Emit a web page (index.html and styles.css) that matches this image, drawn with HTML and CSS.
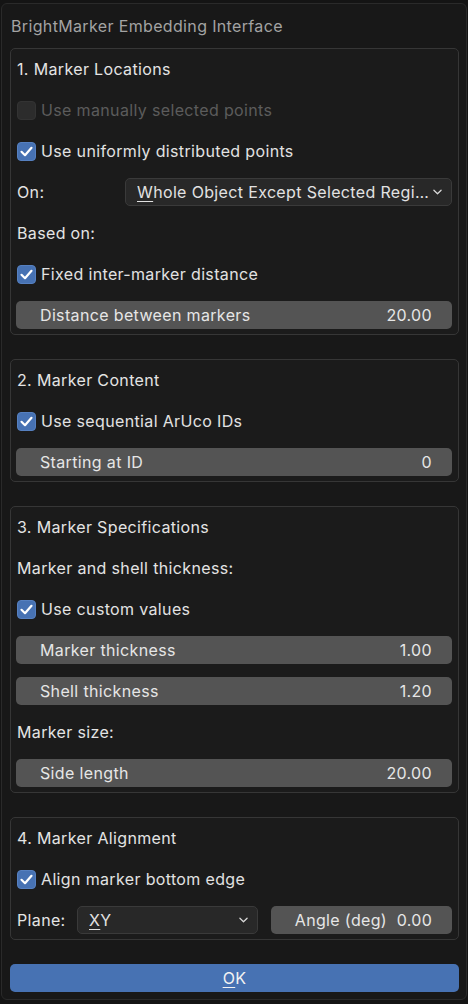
FILE: index.html
```html
<!DOCTYPE html>
<html>
<head>
<meta charset="utf-8">
<link rel="stylesheet" href="styles.css">
</head>
<body>
<div class="dialog">
  <div class="title">BrightMarker Embedding Interface</div>

  <section class="panel">
    <div class="row heading">1. Marker Locations</div>
    <div class="row check disabled"><span class="box"></span><span>Use manually selected points</span></div>
    <div class="row check"><span class="box on"><svg viewBox="0 0 19 19"><path d="M4.5 9.8 L8 13.2 L14.5 5.8"/></svg></span><span>Use uniformly distributed points</span></div>
    <div class="row split">
      <span class="label w-on">On:</span>
      <div class="dropdown grow"><span class="dd-text"><u>W</u>hole Object Except Selected Regi…</span><svg class="chev" viewBox="0 0 10 6"><path d="M1 1 L5 5 L9 1"/></svg></div>
    </div>
    <div class="row label">Based on:</div>
    <div class="row check"><span class="box on"><svg viewBox="0 0 19 19"><path d="M4.5 9.8 L8 13.2 L14.5 5.8"/></svg></span><span>Fixed inter-marker distance</span></div>
    <div class="row field"><span>Distance between markers</span><span>20.00</span></div>
  </section>

  <section class="panel">
    <div class="row heading">2. Marker Content</div>
    <div class="row check"><span class="box on"><svg viewBox="0 0 19 19"><path d="M4.5 9.8 L8 13.2 L14.5 5.8"/></svg></span><span>Use sequential ArUco IDs</span></div>
    <div class="row field"><span>Starting at ID</span><span>0</span></div>
  </section>

  <section class="panel">
    <div class="row heading">3. Marker Specifications</div>
    <div class="row label">Marker and shell thickness:</div>
    <div class="row check"><span class="box on"><svg viewBox="0 0 19 19"><path d="M4.5 9.8 L8 13.2 L14.5 5.8"/></svg></span><span>Use custom values</span></div>
    <div class="row field"><span>Marker thickness</span><span>1.00</span></div>
    <div class="row field"><span>Shell thickness</span><span>1.20</span></div>
    <div class="row label">Marker size:</div>
    <div class="row field"><span>Side length</span><span>20.00</span></div>
  </section>

  <section class="panel">
    <div class="row heading">4. Marker Alignment</div>
    <div class="row check"><span class="box on"><svg viewBox="0 0 19 19"><path d="M4.5 9.8 L8 13.2 L14.5 5.8"/></svg></span><span>Align marker bottom edge</span></div>
    <div class="row split">
      <span class="label w-plane">Plane:</span>
      <div class="dropdown plane"><span class="dd-text"><u>X</u>Y</span><svg class="chev" viewBox="0 0 10 6"><path d="M1 1 L5 5 L9 1"/></svg></div>
      <div class="field angle"><span>Angle (deg)&nbsp;&nbsp;0.00</span></div>
    </div>
  </section>

  <div class="ok"><span><u>O</u>K</span></div>
</div>
</body>
</html>
```

FILE: styles.css
```css
html, body {
  margin: 0;
  padding: 0;
}
body {
  background: #141414;
  width: 468px;
  height: 1004px;
  overflow: hidden;
  font-family: Inter, "DejaVu Sans", sans-serif;
  font-size: 16px;
  letter-spacing: 0.35px;
  color: #e2e2e2;
}
.dialog {
  box-sizing: border-box;
  margin: 3px 0 0 1px;
  width: 466px;
  height: 997px;
  background: #181818;
  border: 1px solid #2a2a2a;
  border-radius: 6px;
  padding: 0 7px 7px 8px;
  display: flex;
  flex-direction: column;
}
.title {
  height: 44px;
  display: flex;
  align-items: center;
  color: #a3a3a3;
  padding-left: 1px;
}
.panel {
  box-sizing: border-box;
  width: 449px;
  border: 1px solid #363636;
  border-radius: 5px;
  background: #1b1b1b;
  padding: 6px 6px 5px 5px;
  margin-bottom: 24px;
  display: flex;
  flex-direction: column;
  gap: 13px;
}
.row {
  height: 28px;
  display: flex;
  align-items: center;
}
.heading, .label {
  padding-left: 1px;
  color: #e4e4e4;
}
.check {
  padding-left: 1px;
  gap: 5px;
}
.box {
  width: 19px;
  height: 19px;
  box-sizing: border-box;
  border-radius: 4px;
  background: #363636;
  border: 1px solid #3e3e3e;
  display: flex;
  flex-shrink: 0;
}
.box.on {
  background: #4772b3;
  border-color: #5680c0;
}
.box svg {
  width: 19px;
  height: 19px;
  margin: -1px;
}
.box svg path {
  fill: none;
  stroke: #ffffff;
  stroke-width: 2.2;
  stroke-linecap: round;
  stroke-linejoin: round;
}
.disabled {
  color: #5c5c5c;
}
.disabled .box {
  background: #2c2c2c;
  border-color: #333333;
}
.split {
  gap: 0;
}
.w-on {
  width: 108px;
}
.w-plane {
  width: 60px;
}
.dropdown {
  box-sizing: border-box;
  height: 28px;
  background: #282828;
  border: 1px solid #3a3a3a;
  border-radius: 5px;
  display: flex;
  align-items: center;
  justify-content: space-between;
  padding: 0 9px 0 11px;
  color: #e2e2e2;
  overflow: hidden;
}
.grow {
  flex: 1;
}
.dd-text {
  white-space: nowrap;
  overflow: hidden;
}
u {
  text-decoration: underline;
  text-underline-offset: 3px;
  text-decoration-thickness: 1px;
}
.chev {
  width: 9px;
  height: 6px;
  flex-shrink: 0;
  margin-left: 4px;
}
.chev path {
  fill: none;
  stroke: #d8d8d8;
  stroke-width: 1.4;
  stroke-linecap: round;
  stroke-linejoin: round;
}
.plane {
  width: 181px;
}
.field {
  box-sizing: border-box;
  height: 28px;
  background: #545454;
  border-radius: 5px;
  display: flex;
  align-items: center;
  justify-content: space-between;
  padding: 0 20px 0 24px;
  color: #e6e6e6;
}
.angle {
  margin-left: 13px;
  flex: 1;
  justify-content: center;
  padding: 0 0 0 4px;
}
.ok {
  width: 449px;
  height: 28px;
  background: #4772b3;
  border-radius: 5px;
  display: flex;
  align-items: center;
  justify-content: center;
  color: #f2f2f2;
  margin-top: auto;
}
```
